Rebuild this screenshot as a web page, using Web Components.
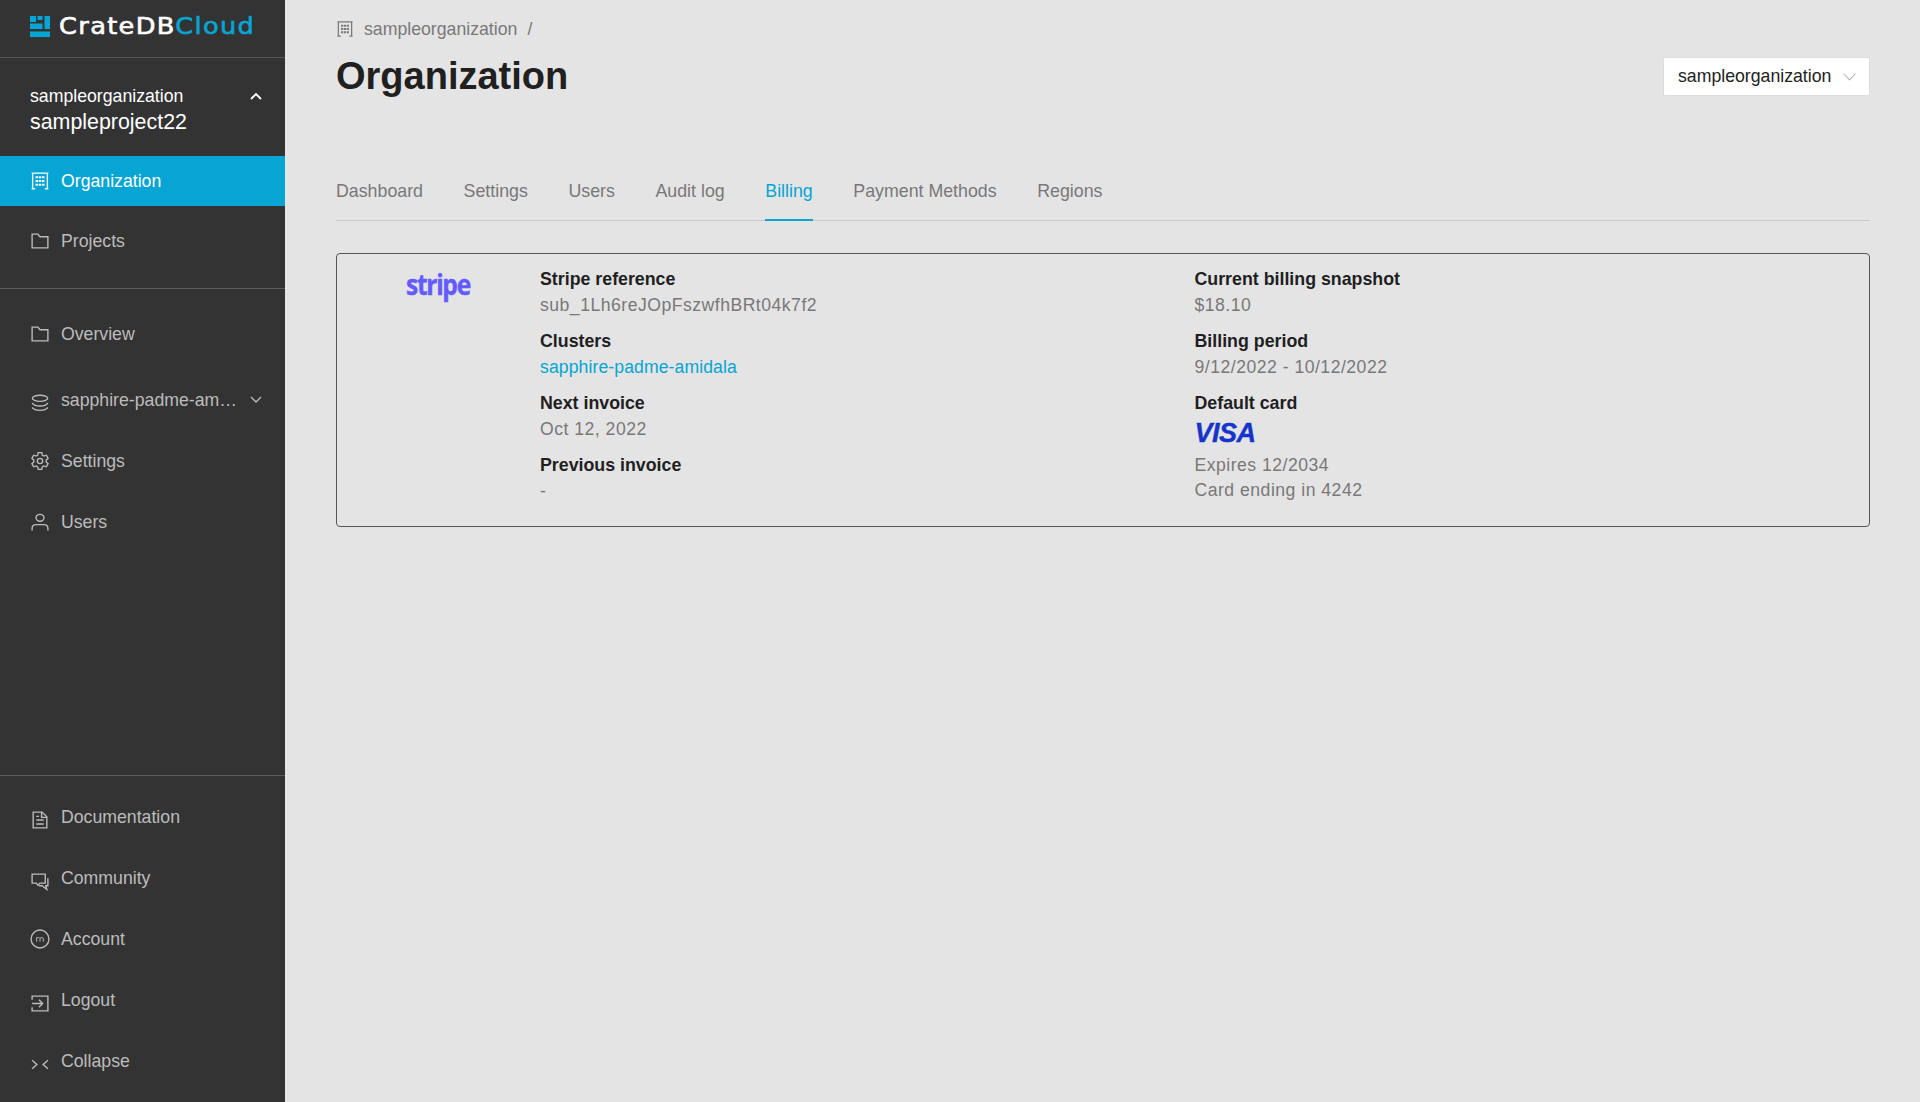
<!DOCTYPE html>
<html lang="en">
<head>
<meta charset="utf-8">
<title>CrateDB Cloud - Billing</title>
<style>
	html, body { margin: 0; height: 100%; background: #e4e4e4; }
	body { font-family: "Liberation Sans", Arial, sans-serif; overflow: hidden; }
	cr-app { height: 1102px; }
</style>
</head>
<body>
<cr-app>
	<cr-sidebar slot="sidebar">
		<cr-section slot="top" class="first">
			<cr-nav-item icon="building" active>Organization</cr-nav-item>
			<cr-nav-item icon="folder">Projects</cr-nav-item>
		</cr-section>
		<cr-section slot="top" class="second">
			<cr-nav-item icon="folder" style="margin-bottom:5px">Overview</cr-nav-item>
			<cr-nav-item icon="database" caret drop>sapphire-padme-amidala</cr-nav-item>
			<cr-nav-item icon="gear">Settings</cr-nav-item>
			<cr-nav-item icon="user">Users</cr-nav-item>
		</cr-section>
		<cr-section slot="bottom" class="third">
			<cr-nav-item icon="doc" drop>Documentation</cr-nav-item>
			<cr-nav-item icon="chat" drop>Community</cr-nav-item>
			<cr-nav-item icon="account">Account</cr-nav-item>
			<cr-nav-item icon="logout" drop>Logout</cr-nav-item>
			<cr-nav-item icon="collapse" drop>Collapse</cr-nav-item>
		</cr-section>
	</cr-sidebar>
	<cr-page-header slot="main" title-text="Organization" crumb="sampleorganization" org="sampleorganization"></cr-page-header>
	<cr-tabs slot="main" active="Billing" items="Dashboard,Settings,Users,Audit log,Billing,Payment Methods,Regions"></cr-tabs>
	<cr-billing-card slot="main">
		<cr-field slot="left" label="Stripe reference">sub_1Lh6reJOpFszwfhBRt04k7f2</cr-field>
		<cr-field slot="left" label="Clusters"><a href="#">sapphire-padme-amidala</a></cr-field>
		<cr-field slot="left" label="Next invoice">Oct 12, 2022</cr-field>
		<cr-field slot="left" label="Previous invoice">-</cr-field>
		<cr-field slot="right" label="Current billing snapshot">$18.10</cr-field>
		<cr-field slot="right" label="Billing period">9/12/2022 - 10/12/2022</cr-field>
		<cr-field slot="right" label="Default card"><span class="visa">VISA</span><br>Expires 12/2034<br>Card ending in 4242</cr-field>
	</cr-billing-card>
</cr-app>

<script>
const ICONS = {
	building: '<path d="M2 2.500h16M3 2.500v15M17 2.500v15M2 17.500h3.500M14.500 17.500H18"/><path d="M5.800 6.500h2.400M8.900 6.500h2.200M11.800 6.500h2.400M5.800 10h2.400M8.900 10h2.200M11.800 10h2.400M5.800 13.500h2.400M8.900 13.500h2.200M11.800 13.500h2.400" stroke-width="2"/>',
	folder: '<path d="M2.500 16.500V3.500h5.500l2 2.500h7.500v10.500z"/>',
	database: '<ellipse cx="10" cy="5.500" rx="7.300" ry="2.900"/><path d="M2.700 9.800c0 1.700 3.300 3 7.300 3s7.300-1.300 7.300-3M2.700 14c0 1.700 3.300 3 7.300 3s7.300-1.300 7.300-3"/>',
	gear: '<path d="M8.300 2h3.400l.5 2.400 1.500.9 2.300-.8 1.700 3-1.800 1.600v1.800l1.800 1.600-1.700 3-2.300-.8-1.500.9-.5 2.400H8.300l-.5-2.400-1.500-.9-2.300.8-1.700-3 1.800-1.600V9.100L2.300 7.500l1.700-3 2.300.8 1.500-.9z"/><circle cx="10" cy="10" r="2.500"/>',
	user: '<ellipse cx="10" cy="6" rx="3.800" ry="3.300"/><path d="M2.500 18v-2c0-2.300 1.800-3.500 4-3.500h7c2.200 0 4 1.200 4 3.500v2"/>',
	doc: '<path d="M3.500 2.500h8.500l4.500 4.500v10.500h-13z"/><path d="M11.500 2.500v5h5M6.500 10h7M6.500 13.800h7M6.500 6.500h2.500"/>',
	chat: '<path d="M2.500 3.500h12.500v8.500h-5l-2 2-1.500-2H2.500z"/><path d="M17.500 7.500v7h-2l1 3.500-4.500-3.500H9"/>',
	account: '<circle cx="10" cy="10" r="8.500"/><path d="M6.800 12.500V8.500M6.800 9.300c.5-1 2.700-1 3.200.2v3M10 9.500c.5-1.200 3.200-1.200 3.200.4v2.600" stroke-width=".9"/>',
	logout: '<path d="M2.500 7V3.500h15v14h-15V14"/><path d="M2.500 10.500h10M9 7l3.500 3.500L9 14"/>',
	collapse: '<path d="M2.500 6.500 7 10.500l-4.500 4M17.500 6.500 13 10.500l4.500 4"/>'
};

const icon = name => `<svg class="ico" viewBox="0.5 0.5 19 19" width="20" height="20" fill="none" stroke="currentColor" stroke-width="1.300" aria-hidden="true">${ICONS[name]}</svg>`;

class CrApp extends HTMLElement {
	constructor() {
		super();
		this.attachShadow({ mode: 'open' });
		this.shadowRoot.innerHTML = `
			<style>
				:host { display: flex; width: 100%; color: #1f1f1f; }
				.side { flex: 0 0 285px; display: flex; }
				main { flex: 1; min-width: 0; padding: 0 50px 0 51px; }
			</style>
			<div class="side"><slot name="sidebar"></slot></div>
			<main><slot name="main"></slot></main>
		`;
	}
}

class CrSidebar extends HTMLElement {
	constructor() {
		super();
		this.attachShadow({ mode: 'open' });
		this.shadowRoot.innerHTML = `
			<style>
				:host {
					display: flex;
					flex-direction: column;
					width: 285px;
					background: #333;
					color: #bcbcbc;
					font-size: 17.700px;
				}
				.logo {
					height: 58px;
					box-sizing: border-box;
					padding: 13px 0 0 30px;
					display: flex;
					align-items: flex-start;
					gap: 9px;
					border-bottom: 1px solid #555;
					font: 400 23px/26px "DejaVu Sans", sans-serif;
					color: #fff;
				}
				.logo svg { margin-top: 3px; flex: none; }
				.logo b { font-weight: 400; color: #06a5d3; }
				.logo span {
					display: inline-block;
					transform-origin: 0 50%;
					transform: scaleX(1.115);
					letter-spacing: 1.200px;
					-webkit-text-stroke: .6px currentColor;
				}
				.account {
					height: 98px;
					box-sizing: border-box;
					padding: 27px 23px 0 30px;
					color: #fff;
				}
				.org { display: flex; justify-content: space-between; align-items: center; line-height: 22px; }
				.org svg { flex: none; }
				.project { font-size: 21.400px; line-height: 26px; margin-top: 2px; }
				.spacer { flex: 1; }
			</style>
			<div class="logo">
				<svg viewBox="0 0 20 21" width="20" height="21" fill="#06a5d3"><path d="M0 0h6v6H0zM7.500 0h5v4h-5zM14.500 0H20v13h-5.500zM0 7.500h12.500V13H0zM0 15.500h20V21H0z"/></svg>
				<span>CrateDB<b>Cloud</b></span>
			</div>
			<div class="account">
				<div class="org">sampleorganization
					<svg viewBox="0 0 12 8" width="12" height="8" fill="none" stroke="#fff" stroke-width="1.800"><path d="M1 7l5-5 5 5"/></svg>
				</div>
				<div class="project">sampleproject22</div>
			</div>
			<slot name="top"></slot>
			<div class="spacer"></div>
			<slot name="bottom"></slot>
		`;
	}
}

class CrSection extends HTMLElement {
	constructor() {
		super();
		this.attachShadow({ mode: 'open' });
		this.shadowRoot.innerHTML = `
			<style>
				:host { display: flex; flex-direction: column; gap: 11px; box-sizing: border-box; }
				:host(.first) { gap: 10px; padding-bottom: 22px; border-bottom: 1px solid #5b5b5b; }
				:host(.second) { padding-top: 20px; }
				:host(.third) { padding: 16px 0 16px; border-top: 1px solid #5b5b5b; }
			</style>
			<slot></slot>
		`;
	}
}

class CrNavItem extends HTMLElement {
	constructor() {
		super();
		this.attachShadow({ mode: 'open' });
		const caret = this.hasAttribute('caret')
			? '<svg viewBox="0 0 12 8" width="12" height="8" fill="none" stroke="currentColor" stroke-width="1.300"><path d="M1 1l5 5 5-5"/></svg>'
			: '';
		this.shadowRoot.innerHTML = `
			<style>
				:host {
					display: flex;
					align-items: center;
					height: 50px;
					padding: 0 23px 0 30px;
					gap: 11px;
					color: #bcbcbc;
				}
				:host([active]) { background: #06a5d3; color: #fff; }
				svg { flex: none; }
				:host([drop]) .ico { position: relative; top: 3px; }
				.label { flex: 1; min-width: 0; white-space: nowrap; overflow: hidden; text-overflow: ellipsis; line-height: 24px; }
			</style>
			${icon(this.getAttribute('icon'))}
			<span class="label"><slot></slot></span>
			${caret}
		`;
	}
}

class CrPageHeader extends HTMLElement {
	constructor() {
		super();
		this.attachShadow({ mode: 'open' });
		this.shadowRoot.innerHTML = `
			<style>
				:host { display: flex; justify-content: space-between; align-items: flex-start; height: 165px; padding-top: 16px; box-sizing: border-box; }
				.crumb { display: flex; align-items: center; gap: 10px; height: 26px; font-size: 17.700px; color: #797979; }
				.crumb svg { flex: none; width: 18px; height: 18px; }
				h1 { margin: 11px 0 0; font-size: 38px; line-height: 46px; font-weight: 700; color: #202020; }
				.select {
					margin-top: 41px;
					width: 207px;
					height: 39px;
					box-sizing: border-box;
					background: #fff;
					border: 1px solid #dcdcdc;
					border-radius: 2px;
					display: flex;
					align-items: center;
					justify-content: space-between;
					padding: 0 13px 0 14px;
					font-size: 17.700px;
					color: #222;
				}
				.select svg { flex: none; }
			</style>
			<div>
				<div class="crumb">${icon('building')}<span>${this.getAttribute('crumb')}</span><span>/</span></div>
				<h1>${this.getAttribute('title-text')}</h1>
			</div>
			<div class="select">${this.getAttribute('org')}
				<svg viewBox="0 0 13 8" width="13" height="8" fill="none" stroke="#b5b5b5" stroke-width="1.100"><path d="M.5.5 6.500 7 12.500.5"/></svg>
			</div>
		`;
	}
}

class CrTabs extends HTMLElement {
	constructor() {
		super();
		this.attachShadow({ mode: 'open' });
		const active = this.getAttribute('active');
		const tabs = this.getAttribute('items').split(',').map(t =>
			`<span class="tab${t === active ? ' on' : ''}">${t}</span>`).join('');
		this.shadowRoot.innerHTML = `
			<style>
				:host { display: flex; gap: 40.600px; height: 56px; box-sizing: border-box; border-bottom: 1px solid #c9c9c9; font-size: 17.800px; }
				.tab { height: 56px; box-sizing: border-box; padding-top: 14px; line-height: 25px; color: #787878; white-space: nowrap; }
				.on { color: #06a5d3; border-bottom: 2px solid #06a5d3; }
			</style>
			${tabs}
		`;
	}
}

class CrBillingCard extends HTMLElement {
	constructor() {
		super();
		this.attachShadow({ mode: 'open' });
		this.shadowRoot.innerHTML = `
			<style>
				:host {
					display: grid;
					grid-template-columns: 203px 654.500px 1fr;
					margin-top: 32px;
					height: 274px;
					box-sizing: border-box;
					padding: 13px 0 24px;
					border: 1.500px solid #555;
					border-radius: 4px;
				}
				.stripe {
					padding: 0 0 0 69px;
					font: 700 28px/34px "Open Sans", sans-serif;
					letter-spacing: -1.500px;
					color: #635bff;
				}
				.stripe span {
					display: inline-block;
					transform-origin: 0 50%;
					transform: scaleX(.880);
					-webkit-text-stroke: .4px currentColor;
				}
				.col { display: flex; flex-direction: column; gap: 11px; }
			</style>
			<div class="stripe"><span>stripe</span></div>
			<div class="col"><slot name="left"></slot></div>
			<div class="col"><slot name="right"></slot></div>
		`;
	}
}

class CrField extends HTMLElement {
	constructor() {
		super();
		this.attachShadow({ mode: 'open' });
		this.shadowRoot.innerHTML = `
			<style>
				:host { display: block; font-size: 17.600px; line-height: 25.500px; }
				.label { font-weight: 700; font-size: 17.800px; color: #1f1f1f; }
				.value { color: #787878; letter-spacing: .500px; }
				::slotted(a) { color: #06a5d3; text-decoration: none; letter-spacing: .100px; }
				::slotted(.visa) {
					display: inline-block;
					font: italic 700 27px/32px "Liberation Sans", sans-serif;
					letter-spacing: -.500px;
					-webkit-text-stroke: .4px currentColor;
					color: #1434cb;
					vertical-align: top;
					margin-bottom: 4px;
				}
			</style>
			<div class="label">${this.getAttribute('label')}</div>
			<div class="value"><slot></slot></div>
		`;
	}
}

customElements.define('cr-app', CrApp);
customElements.define('cr-sidebar', CrSidebar);
customElements.define('cr-section', CrSection);
customElements.define('cr-nav-item', CrNavItem);
customElements.define('cr-page-header', CrPageHeader);
customElements.define('cr-tabs', CrTabs);
customElements.define('cr-billing-card', CrBillingCard);
customElements.define('cr-field', CrField);
</script>
</body>
</html>
